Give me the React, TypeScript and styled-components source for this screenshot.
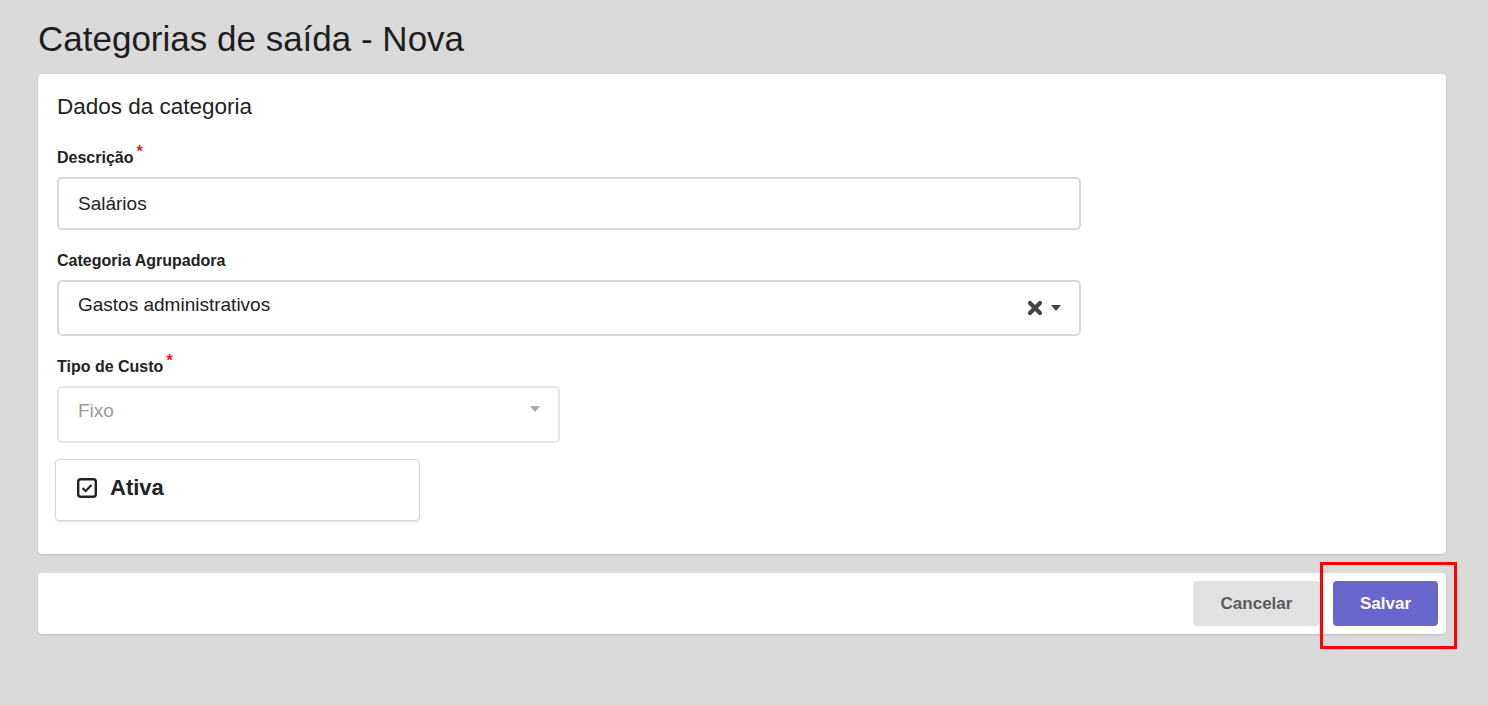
import React from "react";
import styled, { createGlobalStyle } from "styled-components";

const GlobalStyle = createGlobalStyle`
  html, body {
    margin: 0;
    padding: 0;
    background: #dadada;
    font-family: "Liberation Sans", Arial, sans-serif;
    color: #222;
  }
`;

const Page = styled.div`
  position: relative;
  padding: 18px 42px 0 38px;
  min-height: 705px;
  box-sizing: border-box;
`;

const Title = styled.h1`
  margin: 0 0 14px;
  font-size: 35px;
  font-weight: 400;
  line-height: 42px;
  color: #1e1e1e;
`;

const Card = styled.div<{ padding?: string }>`
  background: #fff;
  border-radius: 4px;
  box-shadow: 0 1px 2px rgba(0, 0, 0, 0.15);
  padding: ${({ padding }) => padding ?? "0"};
`;

const CardTitle = styled.div`
  font-size: 22.5px;
  line-height: 26px;
  color: #222;
  margin-bottom: 29px;
`;

const Field = styled.div<{ width?: string; spacing?: string }>`
  width: ${({ width }) => width ?? "1024px"};
  margin-bottom: ${({ spacing }) => spacing ?? "22px"};
`;

const Label = styled.div`
  font-size: 16px;
  font-weight: 700;
  line-height: 18px;
  color: #222;
  margin-bottom: 10px;
`;

const Required = styled.span`
  color: #e02020;
  font-size: 16px;
  position: relative;
  top: -6px;
  margin-left: 3px;
`;

const Input = styled.div<{ height?: string }>`
  display: flex;
  align-items: center;
  height: ${({ height }) => height ?? "53px"};
  box-sizing: border-box;
  border: 2px solid #d9d9d9;
  border-radius: 5px;
  padding: 0 18px 0 19px;
  font-size: 19px;
`;

const SelectBox = styled(Input)<{ disabled?: boolean }>`
  align-items: flex-start;
  padding-top: 12px;
  border-color: ${({ disabled }) => (disabled ? "#e6e6e6" : "#d9d9d9")};
  color: ${({ disabled }) => (disabled ? "#9a9a9a" : "#222")};
`;

const Value = styled.span`
  flex: 1;
`;

const Icons = styled.div`
  display: flex;
  align-items: center;
  gap: 8px;
  margin-top: 6px;
`;

const CheckCard = styled.div`
  display: flex;
  align-items: center;
  gap: 13px;
  width: 365px;
  height: 62px;
  box-sizing: border-box;
  margin-left: -2px;
  padding: 0 0 4px 21px;
  border: 1px solid #d6d6d6;
  border-radius: 4px;
  box-shadow: 0 1px 2px rgba(0, 0, 0, 0.12);
  font-size: 22px;
  font-weight: 700;
  color: #222;
`;

const Footer = styled(Card)`
  display: flex;
  justify-content: flex-end;
  gap: 13px;
  margin-top: 19px;
  padding: 8px 8px 8px 0;
`;

const Button = styled.button<{ primary?: boolean; width: string }>`
  width: ${({ width }) => width};
  height: 45px;
  border: none;
  border-radius: 4px;
  font-family: "Liberation Sans", Arial, sans-serif;
  font-size: 17px;
  font-weight: 700;
  background: ${({ primary }) => (primary ? "#6966cb" : "#e0e1e2")};
  color: ${({ primary }) => (primary ? "#fff" : "#5b5b5b")};
  cursor: pointer;
`;

const Highlight = styled.div`
  position: absolute;
  left: 1320px;
  top: 562px;
  width: 137px;
  height: 87px;
  box-sizing: border-box;
  border: 3px solid #ff0000;
  pointer-events: none;
`;

const Caret = ({ color }: { color: string }) => (
  <svg width="10" height="6" viewBox="0 0 10 6">
    <path d="M0 0 L10 0 L5 6 Z" fill={color} />
  </svg>
);

const ClearIcon = () => (
  <svg width="16" height="16" viewBox="0 0 16 16">
    <path
      d="M3 3 L13 13 M13 3 L3 13"
      stroke="#444"
      strokeWidth="4.2"
      strokeLinecap="round"
    />
  </svg>
);

const CheckIcon = () => (
  <svg width="20" height="20" viewBox="0 0 20 20">
    <rect x="1.2" y="1.2" width="17.6" height="17.6" rx="2.5" fill="none" stroke="#222" strokeWidth="2.4" />
    <path d="M5.5 10 L8.6 13 L14.5 7" fill="none" stroke="#222" strokeWidth="2.2" />
  </svg>
);

export default function App() {
  return (
    <>
      <GlobalStyle />
      <Page>
        <Title>Categorias de saída - Nova</Title>
        <Card padding="20px 19px 33px">
          <CardTitle>Dados da categoria</CardTitle>
          <Field>
            <Label>
              Descrição<Required>*</Required>
            </Label>
            <Input>Salários</Input>
          </Field>
          <Field>
            <Label>Categoria Agrupadora</Label>
            <SelectBox height="56px">
              <Value>Gastos administrativos</Value>
              <Icons>
                <ClearIcon />
                <Caret color="#444" />
              </Icons>
            </SelectBox>
          </Field>
          <Field width="503px" spacing="16px">
            <Label>
              Tipo de Custo<Required>*</Required>
            </Label>
            <SelectBox height="57px" disabled>
              <Value>Fixo</Value>
              <Icons>
                <Caret color="#aaa" />
              </Icons>
            </SelectBox>
          </Field>
          <CheckCard>
            <CheckIcon />
            Ativa
          </CheckCard>
        </Card>
        <Footer>
          <Button width="127px">Cancelar</Button>
          <Button width="105px" primary>
            Salvar
          </Button>
        </Footer>
        <Highlight />
      </Page>
    </>
  );
}
